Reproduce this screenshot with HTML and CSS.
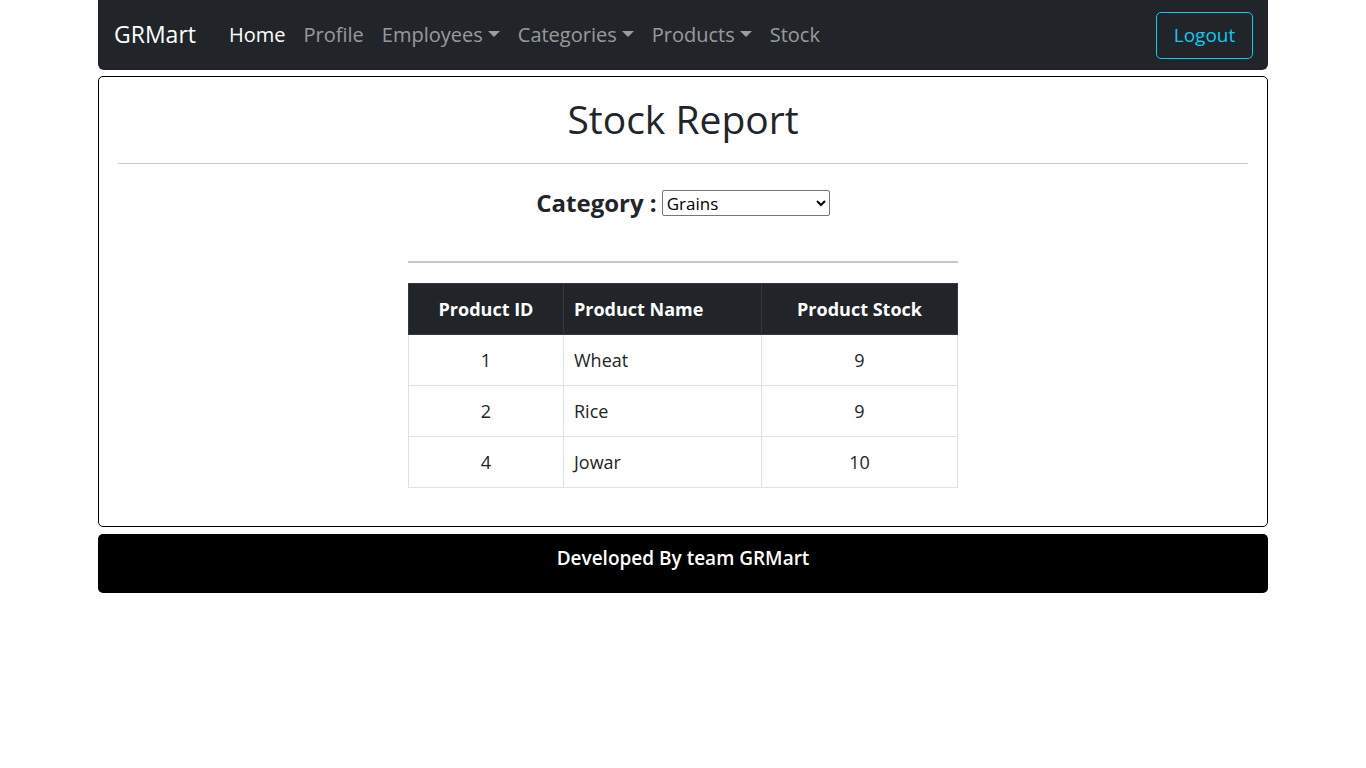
FILE: index.html
```html
<!DOCTYPE html>
<html>
<head>
<meta charset="utf-8">
<title>Stock Report</title>
<link rel="stylesheet" href="styles.css">
</head>
<body>
<div class="container">
  <nav class="navbar">
    <a class="brand" href="#">GRMart</a>
    <ul class="nav-links">
      <li><a class="active" href="#">Home</a></li>
      <li><a href="#">Profile</a></li>
      <li><a class="dropdown" href="#">Employees</a></li>
      <li><a class="dropdown" href="#">Categories</a></li>
      <li><a class="dropdown" href="#">Products</a></li>
      <li><a href="#">Stock</a></li>
    </ul>
    <button class="logout">Logout</button>
  </nav>

  <main class="card">
    <h1 class="title">Stock Report</h1>
    <hr class="sep">
    <div class="filter">
      <label class="filter-label">Category :</label>
      <select class="filter-select">
        <option>Grains</option>
      </select>
    </div>
    <div class="report">
      <hr class="sep2">
      <table class="stock-table">
        <thead>
          <tr><th class="c-id">Product ID</th><th class="c-name">Product Name</th><th class="c-stock">Product Stock</th></tr>
        </thead>
        <tbody>
          <tr><td class="c-id">1</td><td class="c-name">Wheat</td><td class="c-stock">9</td></tr>
          <tr><td class="c-id">2</td><td class="c-name">Rice</td><td class="c-stock">9</td></tr>
          <tr><td class="c-id">4</td><td class="c-name">Jowar</td><td class="c-stock">10</td></tr>
        </tbody>
      </table>
    </div>
  </main>

  <footer class="footer">Developed By team GRMart</footer>
</div>
</body>
</html>
```

FILE: styles.css
```css
* { box-sizing: border-box; }
html, body { margin: 0; padding: 0; }
body {
  font-family: "Open Sans", "Noto Sans", sans-serif;
  color: #212529;
  background: #fff;
}
.container {
  width: 1170px;
  margin: 0 auto;
  display: flex;
  flex-direction: column;
}
.navbar {
  background: #212529;
  height: 70px;
  border-radius: 0 0 6px 6px;
  display: flex;
  align-items: center;
  padding: 0 15px 2px 16px;
}
.brand {
  color: #fff;
  text-decoration: none;
  font-size: 23px;
  margin-right: 24px;
}
.nav-links {
  list-style: none;
  display: flex;
  margin: 0;
  padding: 0;
  flex: 1;
}
.nav-links a {
  display: inline-flex;
  align-items: center;
  color: rgba(255,255,255,0.55);
  text-decoration: none;
  font-size: 20px;
  padding: 8px 9px;
}
.nav-links a.active { color: #fff; }
.nav-links a.dropdown::after {
  content: "";
  display: inline-block;
  margin-left: 5px;
  border-top: 6px solid currentColor;
  border-left: 6px solid transparent;
  border-right: 6px solid transparent;
}
.logout {
  background: transparent;
  border: 1px solid #0dcaf0;
  color: #0dcaf0;
  border-radius: 5px;
  font-family: inherit;
  font-size: 19px;
  width: 97px;
  height: 47px;
  padding: 0;
  margin-top: 2px;
}
.card {
  margin-top: 6px;
  border: 1px solid #000;
  border-radius: 5px;
  padding: 19px 19px 38px;
  display: flex;
  flex-direction: column;
  align-items: center;
}
.title {
  margin: 0;
  font-size: 39px;
  font-weight: 500;
  line-height: 46px;
  height: 50px;
}
.sep {
  width: 100%;
  border: 0;
  border-top: 1px solid #ccc;
  margin: 17px 0 0;
}
.filter {
  margin-top: 22px;
  display: flex;
  align-items: center;
  gap: 5px;
}
.filter-label {
  font-weight: 700;
  font-size: 24px;
}
.filter-select {
  width: 168px;
  height: 26px;
  font-family: inherit;
  font-size: 17px;
  color: #000;
  background: #fff;
  border: 1px solid #767676;
  border-radius: 2px;
}
.report {
  width: 550px;
  margin-top: 42px;
}
.sep2 {
  border: 0;
  border-top: 2px solid #c8c8c8;
  margin: 0 0 20px;
}
.stock-table {
  width: 550px;
  border-collapse: collapse;
  font-size: 18px;
}
.stock-table th, .stock-table td {
  border: 1px solid #dee2e6;
  height: 51px;
  padding: 0 10px;
}
.stock-table th {
  background: #212529;
  color: #fff;
  font-weight: 700;
  height: 51px;
  border-color: #32383e;
}
.c-id { width: 155px; text-align: center; }
.c-name { width: 198px; text-align: left; }
.c-stock { text-align: center; }
.footer {
  margin-top: 7px;
  background: #000;
  color: #fff;
  border-radius: 5px;
  height: 59px;
  display: flex;
  justify-content: center;
  padding-top: 11px;
  font-weight: 600;
  font-size: 19px;
}
```
